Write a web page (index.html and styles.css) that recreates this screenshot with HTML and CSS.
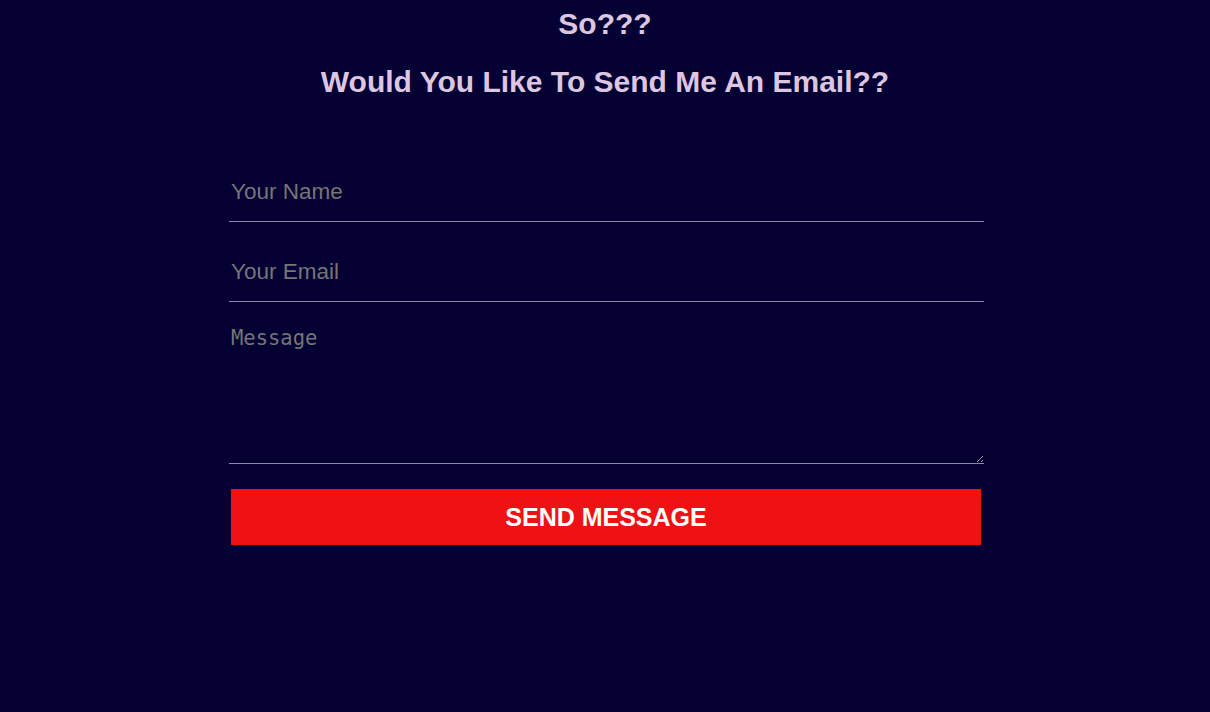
FILE: index.html
```html
<!DOCTYPE html>
<html>
<head>
<meta charset="utf-8">
<link rel="stylesheet" href="styles.css">
</head>
<body>
<section class="contact">
  <h1 class="title">So???</h1>
  <h2 class="subtitle">Would You Like To Send Me An Email??</h2>
  <form class="form">
    <input class="field" type="text" placeholder="Your Name">
    <input class="field" type="email" placeholder="Your Email">
    <textarea class="field area" placeholder="Message"></textarea>
    <button class="send" type="button">SEND MESSAGE</button>
  </form>
</section>
</body>
</html>
```
FILE: styles.css
```css
html, body {
  margin: 0;
  padding: 0;
  background: #040033;
  height: 100%;
}
.contact {
  display: flex;
  flex-direction: column;
  align-items: center;
  font-family: "Liberation Sans", Arial, sans-serif;
}
.title, .subtitle {
  color: #dcc6e0;
  font-weight: bold;
  font-size: 30px;
  line-height: 34px;
  margin: 0;
  text-align: center;
}
.title {
  margin-top: 7px;
}
.subtitle {
  margin-top: 24px;
}
.form {
  width: 755px;
  margin-top: 63px;
  margin-left: 3px;
  display: flex;
  flex-direction: column;
}
.field {
  background: transparent;
  border: none;
  border-bottom: 1px solid #8e8aa6;
  color: #ddd;
  outline: none;
  padding: 0 2px;
  box-sizing: border-box;
  width: 755px;
}
input.field {
  height: 60px;
  font-family: "Liberation Sans", Arial, sans-serif;
  font-size: 22.5px;
  padding-top: 1px;
}
input.field + input.field {
  margin-top: 20px;
}
.field::placeholder {
  color: #757575;
}
.area {
  margin-top: 20px;
  height: 142px;
  font-family: "DejaVu Sans Mono", monospace;
  font-size: 20.5px;
  padding-top: 4px;
  resize: vertical;
}
.send {
  margin-top: 25px;
  margin-left: 2px;
  width: 750px;
  height: 56px;
  background: #f01114;
  color: #fff;
  border: none;
  font-family: "Liberation Sans", Arial, sans-serif;
  font-weight: bold;
  font-size: 25px;
  padding: 0;
}
```
